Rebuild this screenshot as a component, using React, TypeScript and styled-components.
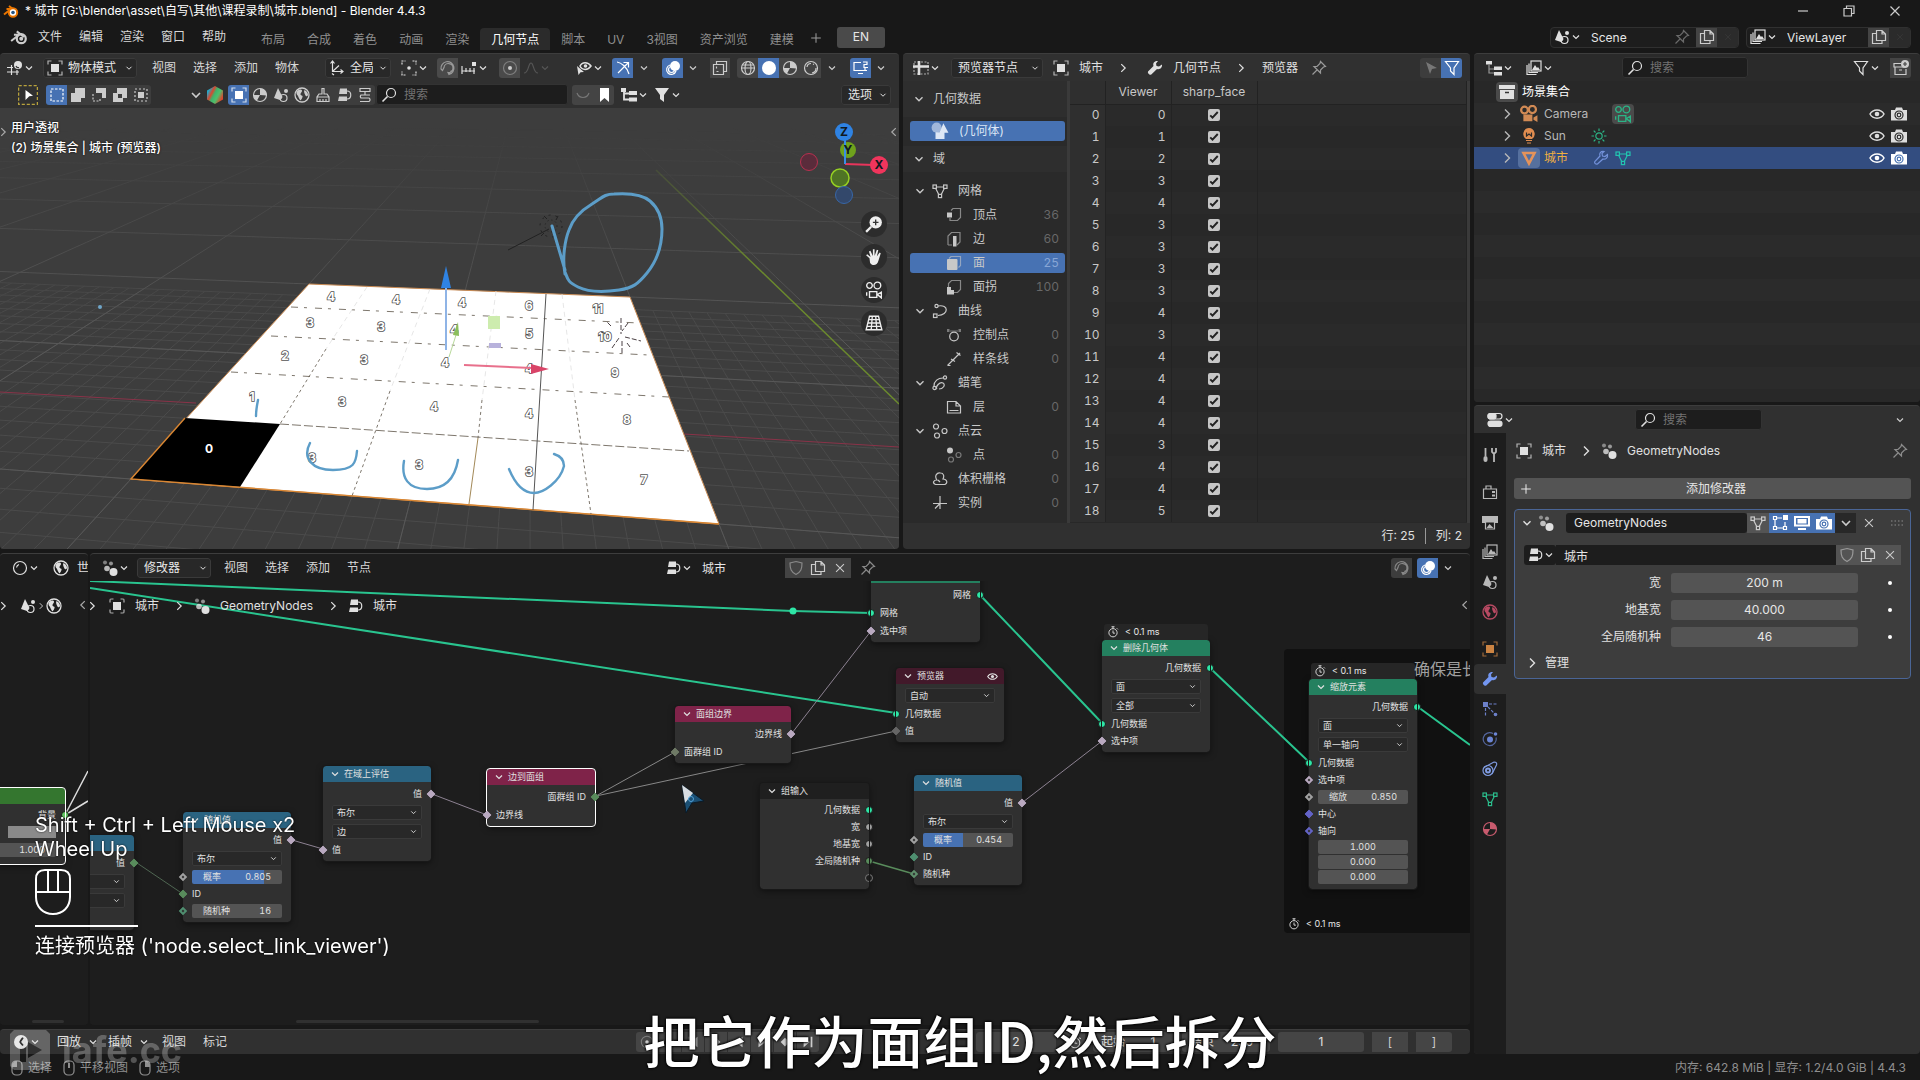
import React from "react";
import styled, { createGlobalStyle, css } from "styled-components";

const Global = createGlobalStyle`
  *, *::before, *::after { box-sizing: border-box; }
  html, body { margin: 0; height: 100%; background: #181818; }
  body {
    color: #e0e0e0;
    font: 12px/16px Inter, "Noto Sans CJK SC", sans-serif;
    overflow: hidden;
  }
  button, input, select { font: inherit; color: inherit; margin: 0; padding: 0; border: 0; background: none; outline: 0; }
  ::placeholder { color: #727272; opacity: 1; }
  svg { display: block; flex: none; }
  h1, h2, h3, p, ul { margin: 0; padding: 0; font: inherit; list-style: none; }
`;

/* ------------------------------------------------------------------ icons */

const meshShape = (
  <>
    <path d="M4 4h8M3.6 5.2L7 12M12.4 5.2L9 12" />
    <rect x="1" y="2" width="3.4" height="3.4" />
    <rect x="11.6" y="2" width="3.4" height="3.4" />
    <rect x="6.4" y="11.4" width="3.2" height="3.2" />
  </>
);

const ICONS: Record<string, React.ReactNode> = {
  down: <path d="M4 6l4 4 4-4" strokeWidth="1.6" />,
  right: <path d="M6 3.5l4.5 4.5L6 12.5" strokeWidth="1.4" />,
  left: <path d="M10 3.5L5.5 8l4.5 4.5" strokeWidth="1.4" />,
  close: <path d="M3.5 3.5l9 9M12.5 3.5l-9 9" />,
  plus: <path d="M8 2.5v11M2.5 8h11" />,
  minimise: <path d="M3 8h10" />,
  restore: <path d="M3 5.5h7.5V13H3zM5.5 5V3H13v7.5h-2" />,
  blender: (
    <>
      <path d="M1 11.5L8 6H3.5M6 3l6.5 5" strokeWidth="1.8" />
      <circle cx="10" cy="9.5" r="4" strokeWidth="2" />
      <circle cx="10" cy="9.5" r="1.2" fill="currentColor" />
    </>
  ),
  blenderColor: (
    <>
      <path d="M1 11.5L8 6H3.5M6 3l6.5 5" stroke="#ea7600" strokeWidth="2" />
      <circle cx="10" cy="9.5" r="4.2" fill="#fff" stroke="#ea7600" strokeWidth="2" />
      <circle cx="10" cy="9.5" r="1.8" fill="#265787" stroke="none" />
    </>
  ),
  view3d: (
    <>
      <path d="M4.5 5v10M0 7.5h6M0 12h12M10 10v5" />
      <circle cx="11" cy="5" r="4" fill="currentColor" stroke="none" />
      <path d="M9 6a2.5 2.5 0 0 0 3 1.5" stroke="#333" />
    </>
  ),
  object: (
    <>
      <rect x="4" y="4" width="8" height="8" fill="currentColor" stroke="none" />
      <path d="M1 4.5V1h3.5M11.5 1H15v3.5M15 11.5V15h-3.5M4.5 15H1v-3.5" opacity=".75" />
    </>
  ),
  axes: <path d="M3.5 1v10.5H14M1.5 3.5l2-2.5 2 2.5M11.5 9.5l2.5 2-2.5 2M3.5 11.5l6.5-6M3 13.5l2 1.5" />,
  pivot: (
    <>
      <circle cx="8" cy="8" r="1.8" fill="currentColor" stroke="none" />
      <path d="M1 4.5V1h3.5M11.5 1H15v3.5M15 11.5V15h-3.5M4.5 15H1v-3.5" strokeDasharray="2 1" />
    </>
  ),
  magnet: <path d="M2.5 10.5L1 9a6.5 6.5 0 1 1 8 5.5L8 12.5a4.5 4.5 0 1 0-4-5zM9 14.5l2.5-4" />,
  snap: (
    <>
      <path d="M1 6v8M5 8v4M9 8v4M13 8v6M1 11h13" />
      <rect x="11" y="2" width="4" height="4" fill="currentColor" stroke="none" />
    </>
  ),
  propEdit: (
    <>
      <circle cx="8" cy="8" r="6.5" opacity=".4" />
      <circle cx="8" cy="8" r="2" fill="currentColor" stroke="none" />
    </>
  ),
  falloff: <path d="M1 13c5 0 4-10 7-10s2 10 7 10" />,
  visibility: (
    <>
      <path d="M4 6c2-4.5 8-4.5 11 0-3 4.5-9 4.5-11 0z" strokeWidth="1.5" />
      <circle cx="9.5" cy="6" r="1.8" fill="currentColor" stroke="none" />
      <path d="M1 6l7 6-3.5.3L2.500 15z" fill="currentColor" stroke="none" />
    </>
  ),
  gizmo: <path d="M2 2c4 .5 10 5 12 12M3 13L13 3M8.5 2.5H13.5V7.5" />,
  overlay: (
    <>
      <circle cx="10" cy="6" r="5" fill="currentColor" stroke="none" />
      <path d="M5 5a4.8 4.8 0 1 0 6 6" />
      <circle cx="6.5" cy="9.5" r="3" />
    </>
  ),
  xray: <path d="M1.5 4.5h10v10h-10zM4.5 4V1.5h10v10H12M4.5 6.5v2M4.5 11.5h2" />,
  wire: (
    <>
      <circle cx="8" cy="8" r="6.5" />
      <ellipse cx="8" cy="8" rx="3" ry="6.5" />
      <path d="M1.5 8h13M2.5 5h11" />
    </>
  ),
  solid: <circle cx="8" cy="8" r="7" fill="currentColor" stroke="none" />,
  material: (
    <>
      <circle cx="8" cy="8" r="6.5" />
      <path d="M8 1.5V8H1.5A6.5 6.5 0 0 0 5 13.5L8 8l6.5.5A6.5 6.5 0 0 0 8 1.5z" fill="currentColor" stroke="none" />
    </>
  ),
  rendered: (
    <>
      <circle cx="8" cy="8" r="6.5" />
      <path d="M4 7a4 4 0 0 1 4-3.5M10 4l1 .5M9 13a5 5 0 0 0 4-5" />
    </>
  ),
  sync: (
    <>
      <path d="M8 2.5H1v8h13M5 13.5h5" />
      <path d="M10 2h4v2.5h-3v3h4M12 10V8" />
    </>
  ),
  cursorTool: (
    <>
      <rect x="0.500" y="0.500" width="15" height="15" stroke="#b8a23c" strokeDasharray="2.500 1.500" strokeWidth="1" />
      <path d="M6 4l6 4.500-3 .5-3 3z" fill="currentColor" stroke="none" />
    </>
  ),
  selBox: <rect x="2" y="2" width="12" height="12" strokeDasharray="2.5 1.5" />,
  selAdd: <path d="M5 1h10v10h-4v4H1V6h4z" fill="currentColor" stroke="none" />,
  selSub: (
    <>
      <path d="M5 1h10v10h-4V6H5z" fill="currentColor" stroke="none" />
      <path d="M2 7v7h7v-3" strokeDasharray="2 1.5" />
    </>
  ),
  selDiff: <path d="M5 1h10v10h-4v4H1V6h4zM6 7v4h4V7z" fill="currentColor" fillRule="evenodd" stroke="none" />,
  selAnd: (
    <>
      <rect x="5" y="5" width="6" height="6" fill="currentColor" stroke="none" />
      <rect x="2" y="2" width="12" height="12" strokeDasharray="2 2" />
    </>
  ),
  scene: (
    <>
      <path d="M5 1l4.5 9A4 4 0 0 1 7 13L1 11z" fill="currentColor" stroke="none" />
      <circle cx="10.5" cy="11" r="3.5" />
      <circle cx="13" cy="4" r="2" fill="currentColor" stroke="none" />
    </>
  ),
  world: (
    <>
      <circle cx="8" cy="8" r="7" strokeWidth="1.3" />
      <path d="M2.500 5c2-3 5-3 5.500-1.500S6 6 6.500 7.500 9 8 8.500 10 7 12.500 6.500 13.500C5 12 4.500 10 4 9S2 7 2.500 5zM10.500 3c2.500 1 3.500 3 3.500 5-1 2.500-2.500 1-3-.5s-1.500-3-.5-4.500z" fill="currentColor" stroke="none" />
    </>
  ),
  brush: <path d="M7 1.5h2V7h3l2 3v4.5H2V10l2-3h3zM2 10h12M5 14v-2M8 14v-2M11 14v-2" />,
  nodetree: (
    <>
      <path d="M4 1.5h7V7H3zM3 9.5h8V14H2z" fill="currentColor" stroke="none" />
      <path d="M11 4c5 0 5 8 0 8" />
    </>
  ),
  tool: <path d="M3 1.5h10v3H3zM8 4.5V8M13 8H4a2 2 0 0 0 0 3h8a2 2 0 0 1 0 3.5H3" />,
  search: (
    <>
      <circle cx="10" cy="6" r="4.5" />
      <path d="M6.5 9.5L1.5 14.5" strokeWidth="1.6" />
    </>
  ),
  arc: <path d="M2 6c2 6 10 6 12 0" />,
  bookmark: <path d="M4 1h9v14l-4.5-4L4 15z" fill="currentColor" stroke="none" />,
  tree: (
    <>
      <path d="M3 3v9.5h5M3 6.5h5" strokeWidth="1.800" />
      <path d="M0 1h5v4H0zM8 4h8v4H8zM8 10.5h8v4H8z" fill="currentColor" stroke="none" />
    </>
  ),
  funnelFill: <path d="M1 1h14l-5 7v7l-4-3V8z" fill="currentColor" stroke="none" />,
  funnel: <path d="M1.5 1.5h13L10 8v6.5L6.5 11V8z" />,
  images: (
    <>
      <path d="M1 5v9.5h9.5M3 3.5v9h9" />
      <rect x="5" y="1" width="10" height="10" />
      <path d="M6 10l3-5 2 3 1-1 2 3z" fill="currentColor" stroke="none" />
    </>
  ),
  copy: <path d="M5 4.5H1.5v10H11V12M5.5 1.5H11L14.5 5v6.5h-9zM11 1.5V5h3.5" />,
  pin: <path d="M9.5 1.5l5 5-2 .5-3 3v3L3 6.5h3l3-3zM6 10l-4.5 4.5" />,
  shield: <path d="M8 1.5l6 1.5c0 6-1 9-6 11.5C3 12 2 9 2 3z" />,
  sheet: (
    <>
      <rect x="1" y="2" width="14" height="12" strokeDasharray="2 1.5" opacity=".7" />
      <path d="M0 6.5h16M6 1v14" strokeWidth="2.6" />
    </>
  ),
  wrench: (
    <path d="M15 4.5l-3 2-2.5-.5L9 3.5 11 1C7.5.5 5.5 3 6.5 6L1 11.5c-.8 1.5 1.5 4 3.3 3L10 9c3 1 5.5-1.5 5-4.5z" fill="currentColor" stroke="none" />
  ),
  wrenchLine: <path d="M14.5 4.5l-2.5 2-2.5-.5L9 3.5 11 1.5C7.5 1 6 3.5 7 6L1.8 11.5c-.8 1.5 1 3.3 2.7 2.5L10 9c3 .5 5-1.5 4.5-4.5z" />,
  arrowCursor: <path d="M3 2l11 6-5 1-2 5z" fill="currentColor" stroke="none" />,
  geometry: (
    <>
      <circle cx="5" cy="5" r="4.5" fill="currentColor" opacity=".6" stroke="none" />
      <path d="M11 1l4.5 8.5h-8zM4 9h8v6H4z" fill="currentColor" stroke="none" />
    </>
  ),
  mesh: meshShape,
  vert: (
    <>
      <path d="M5 3.5L7 1.5h7.5v9l-3 3H4V11" opacity=".6" />
      <rect x="1" y="5.5" width="5" height="5" fill="currentColor" stroke="none" />
    </>
  ),
  edge: (
    <>
      <path d="M2 14V5l3.5-3.5H14V11l-3 3M2 14h4" opacity=".6" />
      <rect x="7" y="5" width="3.5" height="10.5" fill="currentColor" stroke="none" />
    </>
  ),
  face: (
    <>
      <path d="M3 3.5l2-2h9.5v9l-2 2" opacity=".6" />
      <rect x="1" y="4" width="10.5" height="11" rx="1" fill="currentColor" stroke="none" />
    </>
  ),
  corner: (
    <>
      <path d="M2.5 8V4.5l3-3h9v9l-3 3H8" opacity=".6" />
      <path d="M1 8h4v3h3v4.5H1z" fill="currentColor" stroke="none" />
    </>
  ),
  curve: (
    <>
      <path d="M6 3c11-2 11 9 0 9.5" />
      <circle cx="4.5" cy="3" r="1.6" />
      <rect x="1.5" y="11" width="3.5" height="3.5" />
    </>
  ),
  control: (
    <>
      <circle cx="8" cy="9.5" r="4.3" />
      <path d="M4 4h8" opacity=".4" />
      <rect x="1" y="2" width="2.5" height="3" fill="currentColor" opacity=".5" stroke="none" />
      <rect x="12.5" y="2" width="2.5" height="3" fill="currentColor" opacity=".5" stroke="none" />
    </>
  ),
  spline: <path d="M1.5 14.5L14 2M10.5 1.5l4 3M5 8l4 2.5M1.5 14.5h3" />,
  gpencil: (
    <>
      <path d="M2 11c0-5 4-8 9-8M5 14c-2-2 3-8 6-6s0 6-4 6" />
      <circle cx="13" cy="2.5" r="1.6" />
      <circle cx="2.5" cy="13" r="1.6" />
    </>
  ),
  layer: <path d="M1.5 14V2.5H10L14.5 7v7zM10 2.5V7h4.5M3.5 11.5h9" />,
  cloud: (
    <>
      <circle cx="4" cy="3.5" r="2.5" />
      <circle cx="12.5" cy="8" r="2.5" />
      <circle cx="5" cy="12.5" r="2.5" />
    </>
  ),
  point: (
    <>
      <circle cx="4" cy="3.5" r="3" fill="currentColor" stroke="none" />
      <circle cx="12.5" cy="8" r="2.5" opacity=".5" />
      <circle cx="5" cy="12.5" r="2.5" opacity=".5" />
    </>
  ),
  volume: <path d="M5 9C2 5 5 1 8.5 2c3 0 4 3 2.5 6 4 0 5 4 2 5.5H3.5C0 12 1.5 9 5 9zM6 9l2 2" />,
  instance: <path d="M8 1v13M1 8.5h14M8 8.5L3 13.5" />,
  check: <path d="M3 8.5l3 3L13 4" strokeWidth="2.6" />,
  outliner: (
    <>
      <path d="M3 5v8h5M3 9h5" opacity=".6" />
      <path d="M0 1h6v3.5H0zM8 6.5h8V10H8zM8 12h8v3.5H8z" fill="currentColor" stroke="none" />
    </>
  ),
  newCollection: (
    <>
      <path d="M8 3.5H1V7h10M2 7v7.5h11V9M6 10h3" />
      <circle cx="12" cy="4" r="4" fill="currentColor" stroke="none" />
      <path d="M12 2v4M10 4h4" stroke="#444" />
    </>
  ),
  collection: (
    <>
      <path d="M0 1h16v4H0zM1 6h14v9H1z" fill="currentColor" stroke="none" />
      <path d="M6 8.5h4" stroke="#333" strokeWidth="1.6" />
    </>
  ),
  camera: (
    <>
      <circle cx="4" cy="4.5" r="3" strokeWidth="2" />
      <circle cx="11" cy="4" r="3.2" strokeWidth="2" />
      <path d="M3 8.5h8v6H3zM12 11l3.5-2v6L12 13z" fill="currentColor" stroke="none" />
    </>
  ),
  cameraLine: (
    <>
      <circle cx="4" cy="4" r="2.5" />
      <circle cx="11" cy="4" r="3" />
      <path d="M4 9.5h6.5v5H4zM1.5 10v3M11 12l3.5-2v5z" />
    </>
  ),
  bulb: (
    <>
      <path d="M8 0a6 6 0 0 0-3 11h6A6 6 0 0 0 8 0z" fill="currentColor" stroke="none" />
      <path d="M5.5 4.5v3.5l2.5-2 2.5 2V4.5" stroke="#2b2b2b" />
      <path d="M5 12.5h6M6 15h4" />
    </>
  ),
  sun: (
    <>
      <circle cx="8" cy="8" r="3.2" />
      <path d="M8 .5V3M8 13v2.5M.5 8H3M13 8h2.5M2.7 2.7l1.8 1.8M11.5 11.5l1.8 1.8M13.3 2.7l-1.8 1.8M4.5 11.5l-1.8 1.8" />
    </>
  ),
  triangle: <path d="M2.5 3h11L8 13.5z" strokeWidth="2.6" />,
  eye: (
    <>
      <path d="M1 8c3-5.5 11-5.5 14 0-3 5.5-11 5.5-14 0z" strokeWidth="1.5" />
      <circle cx="8" cy="8" r="2.3" fill="currentColor" stroke="none" />
    </>
  ),
  photo: (
    <>
      <path d="M0 4h4l1-2.5h6L12 4h4v10.5H0z" fill="currentColor" stroke="none" />
      <circle cx="8" cy="9" r="4" stroke="#2b2b2b" />
      <circle cx="8" cy="9" r="1.8" stroke="#2b2b2b" />
    </>
  ),
  photoBlue: (
    <>
      <path d="M0 4h4l1-2.5h6L12 4h4v10.5H0z" fill="currentColor" stroke="none" />
      <circle cx="8" cy="9" r="4" stroke="#4772b3" />
      <circle cx="8" cy="9" r="1.8" stroke="#4772b3" />
    </>
  ),
  properties: (
    <>
      <rect x="1" y="1.5" width="14" height="5.5" rx="2.7" />
      <rect x="1" y="9" width="14" height="5.5" rx="2.7" fill="currentColor" />
      <rect x="1" y="1.5" width="8" height="5.5" rx="2" fill="currentColor" />
    </>
  ),
  toolTab: (
    <>
      <path d="M3.5 1v8M10 1v4l2 2 2-2V1M12 7v8" strokeWidth="1.8" />
      <rect x="1.5" y="9" width="4" height="6" rx="2" fill="currentColor" stroke="none" />
    </>
  ),
  renderTab: (
    <>
      <path d="M1.5 5h13v9.5h-13zM4 5V2h5v3" />
      <path d="M10 7h3v2h-3zM10 10.5h3v2h-3z" fill="currentColor" stroke="none" />
    </>
  ),
  outputTab: (
    <>
      <path d="M0 2h16v7H0z" fill="currentColor" stroke="none" />
      <path d="M3.5 8h9v7h-9z" fill="#1d1d1d" />
      <path d="M4.5 14l3-4 4 4z" fill="currentColor" stroke="none" />
    </>
  ),
  nodes: (
    <>
      <circle cx="3" cy="2.5" r="2" fill="currentColor" opacity=".5" stroke="none" />
      <circle cx="9" cy="3.5" r="2" fill="currentColor" opacity=".6" stroke="none" />
      <circle cx="5" cy="8.5" r="2.8" fill="currentColor" opacity=".8" stroke="none" />
      <circle cx="11.5" cy="12" r="4" fill="currentColor" stroke="none" />
    </>
  ),
  editMode: (
    <>
      <path d="M3 4v8M4 13h8M13 12V7M4 3h6" />
      <path d="M1.5 1.5h3v3h-3zM1.5 11.5h3v3h-3zM11.5 11.5h3v3h-3z" />
      <path d="M11 0h5v5h-5z" fill="currentColor" stroke="none" />
    </>
  ),
  monitor: <path d="M0 1h16v10.5H0zM2 3v6.5h12V3zM3.5 4h9v4.5h-9zM4 13h8v2H4z" fill="currentColor" fillRule="evenodd" stroke="none" />,
  grip: <path d="M1 6h14M1 10h14" strokeDasharray="1.5 2" />,
  particles: (
    <>
      <rect x="1" y="1" width="5" height="5" fill="currentColor" stroke="none" />
      <path d="M7 3h8M3.5 7v8M6 6l8 8" strokeDasharray="3 1.5" />
      <circle cx="13.5" cy="13.5" r="1.8" fill="currentColor" stroke="none" />
    </>
  ),
  physics: (
    <>
      <path d="M11 2.5a6.5 6.5 0 1 0 3 4" opacity=".7" />
      <circle cx="8" cy="8.5" r="3" fill="currentColor" stroke="none" />
      <circle cx="13.5" cy="3" r="1.8" fill="currentColor" stroke="none" />
    </>
  ),
  constraint: (
    <>
      <path d="M2 6.5L12 1c2.5 0 3 1.5 2.5 3L10 13" />
      <circle cx="6" cy="9.5" r="5" />
      <circle cx="6" cy="9.5" r="2" strokeWidth="2" />
    </>
  ),
  ball: (
    <>
      <circle cx="8" cy="8" r="6.5" />
      <path d="M4.5 7.5A4 4 0 0 1 7 4.5" />
    </>
  ),
  stopwatch: (
    <>
      <circle cx="8" cy="9" r="5.5" />
      <path d="M6 1h4M8 1v2.5M8 6v3.5h2.5M13 3l1.5 1.5" />
    </>
  ),
  clock: (
    <>
      <circle cx="8" cy="8" r="7" fill="currentColor" stroke="none" />
      <path d="M10 3.5L7 8l3 3.5" stroke="#303030" strokeWidth="1.8" />
    </>
  ),
  zoomIn: (
    <>
      <circle cx="9.5" cy="6.5" r="5.5" fill="currentColor" stroke="none" />
      <path d="M9.5 4v5M7 6.5h5" stroke="#333" />
      <path d="M5.5 10.5L1 15" strokeWidth="2" />
    </>
  ),
  hand: <path d="M4 9L1 6.5l1-1L5 8 3.5 3l1.3-.5L7 7V1h1.5v6l2-5.5 1.3.5L10.5 7.5 13 4l1 .7L12 11c-1 5-6 5-7.5 2z" fill="currentColor" stroke="none" />,
  perspective: <path d="M4 2h8l3 12H1zM2.5 8h11M3.2 5h9.6M2 11h12M6.5 2L5.5 14M9.5 2l1 12" />,
  jumpStart: <path d="M3 2h2v12H3zM13 2v12L6 8z" fill="currentColor" stroke="none" />,
  playBack: <path d="M12 2v12L4 8z" fill="currentColor" stroke="none" />,
  play: <path d="M4 2v12l8-6z" fill="currentColor" stroke="none" />,
  keyframe: <path d="M8 3l5 5-5 5-5-5z" fill="currentColor" stroke="none" />,
  jumpEnd: <path d="M3 2v12l7-6zM11 2h2v12h-2z" fill="currentColor" stroke="none" />,
  mouseLeft: (
    <>
      <path d="M3 5a4 4 0 0 1 4-4h2a4 4 0 0 1 4 4v6a4 4 0 0 1-4 4H7a4 4 0 0 1-4-4z" />
      <path d="M3 7V4l3-3h2v6z" fill="currentColor" stroke="none" />
    </>
  ),
  mouseMiddle: (
    <>
      <path d="M3 5a4 4 0 0 1 4-4h2a4 4 0 0 1 4 4v6a4 4 0 0 1-4 4H7a4 4 0 0 1-4-4z" />
      <path d="M7 3h2v5H7z" fill="currentColor" stroke="none" />
    </>
  ),
  mouseRight: (
    <>
      <path d="M3 5a4 4 0 0 1 4-4h2a4 4 0 0 1 4 4v6a4 4 0 0 1-4 4H7a4 4 0 0 1-4-4z" />
      <path d="M8 1h2l3 3v3H8z" fill="currentColor" stroke="none" />
    </>
  ),
};

const Icon = ({ n, s = 16, c }: { n: string; s?: number; c?: string }) => (
  <svg width={s} height={s} viewBox="0 0 16 16" fill="none" stroke="currentColor" strokeWidth="1.2" color={c} aria-hidden="true">
    {ICONS[n]}
  </svg>
);

/* --------------------------------------------------------------- controls */

const Page = styled.div`
  display: flex;
  flex-direction: column;
  height: 100vh;
  min-height: 640px;
`;

const Btn = styled.button<{ $on?: boolean; $bg?: string; $w?: number; $dim?: boolean }>`
  display: flex;
  align-items: center;
  justify-content: center;
  flex: none;
  height: 20px;
  width: ${(p) => p.$w ?? 21}px;
  background: ${(p) => (p.$on ? "#4772b3" : p.$bg ?? "transparent")};
  color: ${(p) => (p.$dim ? "#6a6a6a" : p.$on ? "#ffffff" : "#cccccc")};
`;

const Drop = styled.button<{ $dim?: boolean; $dark?: boolean }>`
  display: flex;
  align-items: center;
  justify-content: space-between;
  flex: none;
  width: 32px;
  height: 20px;
  padding: 0 1px 0 3px;
  border-radius: 3px;
  color: ${(p) => (p.$dim ? "#555555" : "#e0e0e0")};
  background: ${(p) => (p.$dark ? "#1d1d1d" : "transparent")};
`;

const IconDrop = ({ n, dim, dark, label }: { n: string; dim?: boolean; dark?: boolean; label: string }) => (
  <Drop $dim={dim} $dark={dark} aria-label={label}>
    <Icon n={n} />
    <Icon n="down" s={12} />
  </Drop>
);

const SelectWrap = styled.span<{ $w: number; $icon?: boolean }>`
  display: flex;
  align-items: center;
  flex: none;
  gap: ${(p) => (p.$icon ? 5 : 3)}px;
  width: ${(p) => p.$w}px;
  height: 20px;
  padding: 0 2px 0 ${(p) => (p.$icon ? 3 : 6)}px;
  border: 1px solid #3a3a3a;
  border-radius: 3px;
  background: #282828;
  select {
    appearance: none;
    flex: 1;
    min-width: 0;
    height: 18px;
    color: #e6e6e6;
  }
`;

const Select = ({ value, w, icon, label }: { value: string; w: number; icon?: string; label: string }) => (
  <SelectWrap $w={w} $icon={!!icon}>
    {icon && <Icon n={icon} />}
    <select aria-label={label}>
      <option>{value}</option>
    </select>
    <Icon n="down" s={10} />
  </SelectWrap>
);

const Cluster = styled.div<{ $ml?: number; $auto?: boolean; $gap?: number; $bg?: string }>`
  display: flex;
  align-items: center;
  flex: none;
  gap: ${(p) => p.$gap ?? 0}px;
  margin-left: ${(p) => (p.$auto ? "auto" : `${p.$ml ?? 0}px`)};
  border-radius: 3px;
  overflow: hidden;
  background: ${(p) => p.$bg ?? "transparent"};
`;

const Menus = styled.nav<{ $ml?: number }>`
  display: flex;
  flex: none;
  gap: 1px;
  margin-left: ${(p) => p.$ml ?? 8}px;
  button {
    height: 20px;
    padding: 0 8px;
    color: #d8d8d8;
    white-space: nowrap;
  }
`;

const Search = styled.label<{ $w: number }>`
  display: flex;
  align-items: center;
  flex: none;
  gap: 7px;
  width: ${(p) => p.$w}px;
  height: 21px;
  padding: 0 5px 0 4px;
  border: 1px solid #333333;
  border-radius: 3px;
  background: #1d1d1d;
  input {
    min-width: 0;
    width: 100%;
  }
`;

const SearchBox = ({ w, label }: { w: number; label: string }) => (
  <Search $w={w}>
    <Icon n="search" />
    <input type="search" placeholder="搜索" aria-label={label} />
  </Search>
);

const TextField = styled.input<{ $w?: number }>`
  width: ${(p) => (p.$w ? `${p.$w}px` : "auto")};
  flex: ${(p) => (p.$w ? "none" : "1")};
  min-width: 0;
  height: 20px;
  padding: 0 8px;
  background: #1d1d1d;
  color: #e6e6e6;
`;

const Crumb = styled.span<{ $ml?: number }>`
  margin-left: ${(p) => p.$ml ?? 10}px;
  white-space: nowrap;
  color: #e0e0e0;
`;

const Sep = styled.span<{ $l?: number; $r?: number }>`
  display: flex;
  margin: 0 ${(p) => p.$r ?? 8}px 0 ${(p) => p.$l ?? 13}px;
`;

const Area = styled.section<{ $bg?: string }>`
  display: flex;
  flex-direction: column;
  min-width: 0;
  min-height: 0;
  overflow: hidden;
  border-top: 1px solid #3d3d3d;
  border-radius: 4px;
  background: ${(p) => p.$bg ?? "#303030"};
`;

const HeaderRow = styled.header<{ $pl?: number; $pr?: number }>`
  display: flex;
  align-items: center;
  flex: none;
  height: 27px;
  padding: 0 ${(p) => p.$pr ?? 8}px 0 ${(p) => p.$pl ?? 4}px;
`;

/* ---------------------------------------------------------------- top bars */

const TitleBar = styled.div`
  display: flex;
  align-items: center;
  gap: 6px;
  height: 24px;
  flex: none;
  padding: 0 17px 2px 3px;
  color: #ffffff;
  h1 {
    flex: 1;
    white-space: nowrap;
  }
`;

const WindowButtons = styled.div`
  display: flex;
  gap: 30px;
`;

const TopBar = styled.div`
  display: flex;
  align-items: center;
  flex: none;
  height: 28px;
  padding: 0 9px 2px 10px;
`;

const TabList = styled.div`
  display: flex;
  align-self: flex-end;
  margin-left: 16px;
`;

const Tab = styled.button<{ $active?: boolean }>`
  height: 22px;
  padding: 2px 11px 0;
  border-radius: 4px 4px 0 0;
  white-space: nowrap;
  background: ${(p) => (p.$active ? "#2b2b2b" : "transparent")};
  color: ${(p) => (p.$active ? "#ffffff" : "#8f8f8f")};
`;

const LangButton = styled.button`
  width: 48px;
  height: 21px;
  margin-left: 10px;
  border-radius: 3px;
  background: #4a4a4a;
  color: #e6e6e6;
`;

const IdGroup = styled.div`
  display: flex;
  align-items: center;
  margin-left: 7px;
  height: 21px;
  overflow: hidden;
  border: 1px solid #303030;
  border-radius: 4px;
  background: #1d1d1d;
`;

const TopHeader = () => (
  <>
    <TitleBar>
      <Icon n="blenderColor" />
      <h1>* 城市 [G:\blender\asset\自写\其他\课程录制\城市.blend] - Blender 4.4.3</h1>
      <WindowButtons>
        <Btn $w={16} aria-label="最小化"><Icon n="minimise" /></Btn>
        <Btn $w={16} aria-label="还原"><Icon n="restore" /></Btn>
        <Btn $w={16} aria-label="关闭"><Icon n="close" /></Btn>
      </WindowButtons>
    </TitleBar>
    <TopBar>
      <Btn $w={18} aria-label="Blender"><Icon n="blender" s={18} /></Btn>
      <Menus $ml={2}>
        {["文件", "编辑", "渲染", "窗口", "帮助"].map((t) => <button key={t}>{t}</button>)}
      </Menus>
      <TabList role="tablist">
        {["布局", "合成", "着色", "动画", "渲染", "几何节点", "脚本", "UV", "3视图", "资产浏览", "建模"].map((t) => (
          <Tab key={t} role="tab" $active={t === "几何节点"} aria-selected={t === "几何节点"}>{t}</Tab>
        ))}
        <Btn $w={22} aria-label="添加工作区"><Icon n="plus" s={14} c="#999999" /></Btn>
      </TabList>
      <LangButton>EN</LangButton>
      <Cluster $auto>
        <IdGroup>
          <IconDrop n="scene" label="场景" />
          <TextField $w={84} defaultValue="Scene" aria-label="场景名称" />
          <Btn $w={29} $dim aria-label="固定"><Icon n="pin" /></Btn>
          <Btn $bg="#444444" aria-label="新建场景"><Icon n="copy" /></Btn>
          <Btn $bg="#2b2b2b" $dim aria-label="删除场景"><Icon n="close" s={10} c="#3a3a3a" /></Btn>
        </IdGroup>
        <IdGroup>
          <IconDrop n="images" label="视图层" />
          <TextField $w={89} defaultValue="ViewLayer" aria-label="视图层名称" />
          <Btn $bg="#444444" aria-label="新建视图层"><Icon n="copy" /></Btn>
          <Btn $bg="#2b2b2b" $dim aria-label="删除视图层"><Icon n="close" s={10} c="#3a3a3a" /></Btn>
        </IdGroup>
      </Cluster>
    </TopBar>
  </>
);

/* ------------------------------------------------------------- 3D viewport */

const ViewportArea = styled(Area)`
  flex: 899 1 0;
`;

const Stage = styled.div`
  position: relative;
  flex: 1;
  min-height: 0;
  background: #3d3d3d;
`;

const SceneSvg = styled.svg`
  position: absolute;
  inset: 0;
  width: 100%;
  height: 100%;
  text {
    font: 700 12px Inter, sans-serif;
    text-anchor: middle;
  }
`;

const StageText = styled.div`
  position: absolute;
  left: 11px;
  top: 10px;
  font-weight: 500;
  line-height: 20px;
  color: #ffffff;
  text-shadow: 0 0 2px #000000;
`;

const NavColumn = styled.div`
  position: absolute;
  right: 12px;
  top: 103px;
  display: flex;
  flex-direction: column;
  gap: 7px;
  button {
    width: 26px;
    height: 26px;
    border-radius: 13px;
    display: grid;
    place-items: center;
    background: #2c2c2c;
    color: #eeeeee;
  }
`;

const EdgeTab = styled.button<{ $right?: boolean; $top: number }>`
  position: absolute;
  ${(p) => (p.$right ? css`right: -2px;` : css`left: -4px;`)}
  top: ${(p) => p.$top}px;
  color: #aaaaaa;
`;

type P = [number, number];
const TL: P = [309, 284], TR: P = [630, 297], BR: P = [719, 524], BL: P = [131, 479];

/* Perspective map from the unit square of the ground plane to the view. */
const project = (() => {
  const d1 = [TR[0] - BR[0], TR[1] - BR[1]];
  const d2 = [BL[0] - BR[0], BL[1] - BR[1]];
  const d3 = [TL[0] - TR[0] + BR[0] - BL[0], TL[1] - TR[1] + BR[1] - BL[1]];
  const det = d1[0] * d2[1] - d2[0] * d1[1];
  const g = (d3[0] * d2[1] - d2[0] * d3[1]) / det;
  const h = (d1[0] * d3[1] - d3[0] * d1[1]) / det;
  return (u: number, v: number): P | null => {
    const w = g * u + h * v + 1;
    if (w < 0.08) return null;
    return [
      ((TR[0] - TL[0] + g * TR[0]) * u + (BL[0] - TL[0] + h * BL[0]) * v + TL[0]) / w,
      ((TR[1] - TL[1] + g * TR[1]) * u + (BL[1] - TL[1] + h * BL[1]) * v + TL[1]) / w,
    ];
  };
})();

const trace = (at: (t: number) => P | null, from: number, to: number) => {
  let d = "";
  for (let i = 0; i <= 60; i++) {
    const p = at(from + ((to - from) * i) / 60);
    if (p) d += `${d ? "L" : "M"}${p[0].toFixed(1)} ${p[1].toFixed(1)}`;
  }
  return d;
};

const range = (a: number, b: number, step: number) =>
  Array.from({ length: Math.round((b - a) / step) + 1 }, (_, i) => a + i * step);

const FACES: [string, number, number][] = [
  ["4", 331, 297], ["4", 396, 300], ["4", 462, 303], ["6", 529, 306], ["11", 598, 309],
  ["3", 310, 323], ["3", 381, 327], ["4", 454, 330], ["5", 529, 334], ["10", 605, 337],
  ["2", 285, 356], ["3", 364, 360], ["4", 445, 363], ["4", 529, 369], ["9", 615, 373],
  ["1", 252, 397], ["3", 342, 402], ["4", 434, 407], ["4", 529, 414], ["8", 627, 420],
  ["0", 209, 449], ["3", 312, 458], ["3", 419, 465], ["3", 529, 472], ["7", 644, 480],
];

const Scene = () => (
  <SceneSvg viewBox="0 108 899 441" preserveAspectRatio="xMidYMid slice" role="img" aria-label="三维视图">
    <defs>
      <linearGradient id="fade" x1="0" y1="0" x2="0" y2="1">
        <stop offset="0.05" stopColor="#000" />
        <stop offset="0.5" stopColor="#fff" />
      </linearGradient>
      <mask id="far" maskUnits="userSpaceOnUse" x="0" y="106" width="899" height="443">
        <rect x="0" y="106" width="899" height="443" fill="url(#fade)" />
      </mask>
      <linearGradient id="axis" gradientUnits="userSpaceOnUse" x1="655" y1="170" x2="760" y2="270">
        <stop offset="0" stopColor="#6b8a2c" stopOpacity="0.2" />
        <stop offset="1" stopColor="#6b8a2c" />
      </linearGradient>
    </defs>
    <g mask="url(#far)" fill="none">
      <g stroke="#4b4b4b">
        {range(-3, 4, 0.05).map((u) => <path key={`u${u}`} d={trace((t) => project(u, t), 0.1, 1.8)} />)}
        {range(0.1, 1.8, 0.05).map((v) => <path key={`v${v}`} d={trace((t) => project(t, v), -3, 4)} />)}
      </g>
      <g stroke="#585858">
        {range(-5, 6, 0.5).map((u) => <path key={`U${u}`} d={trace((t) => project(u, t), -5, 1.8)} />)}
        {range(-5, 1.5, 0.5).map((v) => <path key={`V${v}`} d={trace((t) => project(t, v), -5, 6)} />)}
      </g>
    </g>
    <path d="M0 392L196 403M684 434L899 447" stroke="#8a3349" />
    <path d="M656 170L899 404" stroke="url(#axis)" strokeWidth="1.5" />
    <path d="M309 284L630 297 719 524 131 479z" fill="#ffffff" stroke="#c98a52" strokeWidth="1" />
    <path d="M185 418L280 424 240 487 131 479z" fill="#000000" />
    <path d="M185 418L131 479 719 524" fill="none" stroke="#d98632" strokeWidth="1.4" />
    <g stroke="#5c5346" strokeWidth="0.8">
      <path d="M291 307L639 323M271 336L649 355M231 372L669 397" strokeDasharray="7 6 3 8" />
      <path d="M280 424L689 451" strokeDasharray="9 3" />
      <path d="M326 349L280 424M390 391L352 496M575 400L591 514" strokeDasharray="3 3" />
      <path d="M482 400L478 438" strokeDasharray="3 3" />
      <path d="M478 438L469 504" stroke="#8a6a2c" />
    </g>
    <path d="M367 287L326 349M430 289L390 391M496 291L482 400M562 294L575 400" stroke="#e0e0e0" strokeWidth="0.8" strokeDasharray="5 4" />
    <path d="M546 294L533 510" stroke="#555555" />
    {FACES.map(([t, x, y], i) => (
      <text key={i} x={x} y={y + 4} fill="#ffffff" stroke={t === "0" ? "none" : "#555555"} strokeWidth="1.6" paintOrder="stroke">{t}</text>
    ))}
    <g stroke="#222222" fill="none">
      <circle cx="551" cy="226" r="6" strokeDasharray="1 3" />
      <circle cx="551" cy="226" r="11" strokeDasharray="2 5" />
      <path d="M508 250L549 229M544 216l3 3M558 216l-2 4M541 236l3-3" />
    </g>
    <path d="M621 318v16M628 323l-6 8M611 326l-4-4M625 337l16 4M622 353v-12M612 348l7-10M601 332l8 3M630 347l-3-4" stroke="#4a4044" strokeDasharray="5 2" />
    <path d="M446 350V287" stroke="#8fb4e6" strokeWidth="2" />
    <path d="M446 266l5 22h-10z" fill="#2f83e3" />
    <path d="M464 365L532 368" stroke="#e8708c" strokeWidth="2" />
    <path d="M549 369l-18 5v-10z" fill="#d94468" />
    <path d="M449 357L456 335" stroke="#b8d99a" />
    <path d="M458 322l1 14-6-1z" fill="#8cbf5c" />
    <rect x="488" y="316" width="12" height="13" fill="#cdecae" />
    <rect x="489" y="343" width="12" height="5" fill="#b8b2dc" />
    <g fill="none" stroke="#5c9dc8" strokeWidth="3" strokeLinecap="round">
      <path d="M552 226L565 270M565 274C562 258 565 240 569 230 573 218 582 210 592 204S604 194 614 194C628 193 642 194 650 201S662 217 662 229C662 248 656 262 647 273S633 288 619 290C605 292 588 292 578 287S568 280 565 272" />
      <path d="M258 400C257 405 256 410 256 416M310 443C302 458 312 470 333 470S356 463 357 451M404 461C401 478 408 489 427 489S455 478 458 460M509 469C516 486 525 493 534 493S560 482 564 466Q564 457 554 454" strokeWidth="2.4" />
    </g>
    <circle cx="100" cy="307" r="2" fill="#6fa6c9" />
    <g fontWeight="700">
      <path d="M845 164L874 165" stroke="#e8355c" strokeWidth="2" />
      <circle cx="809" cy="162" r="8.5" fill="#5a2c3b" stroke="#b8304f" />
      <circle cx="848" cy="150" r="8" fill="#6fa21c" />
      <path d="M845 164V134" stroke="#3a8fe6" strokeWidth="2" />
      <circle cx="844" cy="132" r="9" fill="#2f83e3" />
      <circle cx="879" cy="165" r="9" fill="#f0355c" />
      <circle cx="840" cy="178" r="9" fill="#4f7325" stroke="#95d023" strokeWidth="1.5" />
      <circle cx="844" cy="195" r="8.5" fill="#33486b" stroke="#3767a8" />
      <text x="844" y="136" fill="#101820">Z</text>
      <text x="848" y="154" fill="#101820">Y</text>
      <text x="879" y="169" fill="#101820">X</text>
    </g>
  </SceneSvg>
);

const Viewport = () => (
  <ViewportArea aria-label="三维视图">
    <HeaderRow>
      <IconDrop n="view3d" label="编辑器类型" />
      <Cluster $ml={7}><Select value="物体模式" icon="object" w={94} label="模式" /></Cluster>
      <Menus $ml={7}>{["视图", "选择", "添加", "物体"].map((t) => <button key={t}>{t}</button>)}</Menus>
      <Cluster $ml={18}><Select value="全局" icon="axes" w={66} label="坐标系" /></Cluster>
      <Cluster $ml={7}><IconDrop n="pivot" label="轴心点" /></Cluster>
      <Cluster $ml={7}>
        <Btn $bg="#4a4a4a" $dim aria-label="吸附"><Icon n="magnet" c="#999999" /></Btn>
        <IconDrop n="snap" label="吸附到" />
      </Cluster>
      <Cluster $ml={9}>
        <Btn $bg="#4a4a4a" aria-label="衰减编辑"><Icon n="propEdit" /></Btn>
        <IconDrop n="falloff" dim label="衰减" />
      </Cluster>
      <Cluster $auto $gap={7}>
        <IconDrop n="visibility" label="可见性" />
        <Cluster>
          <Btn $on aria-label="Gizmo"><Icon n="gizmo" /></Btn>
          <Btn $w={22} aria-label="Gizmo 选项"><Icon n="down" s={12} /></Btn>
        </Cluster>
        <Cluster>
          <Btn $on aria-label="叠加层"><Icon n="overlay" /></Btn>
          <Btn $w={20} aria-label="叠加层选项"><Icon n="down" s={12} /></Btn>
        </Cluster>
        <Btn $bg="#444444" $w={20} aria-label="透视模式"><Icon n="xray" /></Btn>
        <Cluster>
          <Btn $bg="#444444" aria-label="线框"><Icon n="wire" /></Btn>
          <Btn $on aria-label="实体"><Icon n="solid" /></Btn>
          <Btn $bg="#444444" aria-label="材质预览"><Icon n="material" /></Btn>
          <Btn $bg="#444444" aria-label="渲染"><Icon n="rendered" /></Btn>
          <Btn $w={22} aria-label="着色选项"><Icon n="down" s={12} /></Btn>
        </Cluster>
        <Cluster>
          <Btn $on aria-label="视图同步"><Icon n="sync" /></Btn>
          <Btn $w={20} aria-label="同步选项"><Icon n="down" s={12} /></Btn>
        </Cluster>
      </Cluster>
    </HeaderRow>
    <HeaderRow $pl={17}>
      <Btn aria-label="选择工具"><Icon n="cursorTool" s={20} c="#ffffff" /></Btn>
      <Cluster $ml={8}>
        <Btn $on aria-label="设定选择"><Icon n="selBox" /></Btn>
        {["selAdd", "selSub", "selDiff", "selAnd"].map((n) => <Btn key={n} $bg="#3d3d3d" aria-label={n}><Icon n={n} /></Btn>)}
      </Cluster>
      <Cluster $ml={36}>
        <Btn $w={18} aria-label="展开"><Icon n="down" /></Btn>
        <Btn $w={20} aria-label="颜色">
          <svg width="16" height="18" viewBox="0 0 16 18">
            <defs>
              <linearGradient id="hex" x1="0" y1="0.2" x2="1" y2="0.8">
                <stop offset="0.1" stopColor="#25a7c9" />
                <stop offset="0.3" stopColor="#d9482f" />
                <stop offset="0.45" stopColor="#3fb36b" />
                <stop offset="0.65" stopColor="#4fc06b" />
                <stop offset="0.9" stopColor="#d9482f" />
              </linearGradient>
            </defs>
            <path d="M8 0l8 4.5v9L8 18 0 13.5v-9z" fill="url(#hex)" />
          </svg>
        </Btn>
      </Cluster>
      <Cluster $ml={3}>
        <Btn $on aria-label="物体"><Icon n="object" /></Btn>
        {["material", "scene", "world", "brush", "nodetree", "tool"].map((n) => <Btn key={n} $bg="#3d3d3d" aria-label={n}><Icon n={n} /></Btn>)}
      </Cluster>
      <Cluster $ml={1} $gap={4}>
        <SearchBox w={192} label="搜索资产" />
        <Cluster>
          <Btn $bg="#444444" aria-label="曲线"><Icon n="arc" c="#777777" /></Btn>
          <Btn $bg="#444444" aria-label="书签"><Icon n="bookmark" c="#ffffff" /></Btn>
        </Cluster>
        <Cluster $gap={1}>
          <IconDrop n="tree" label="层级" />
          <IconDrop n="funnelFill" label="过滤" />
        </Cluster>
      </Cluster>
      <Cluster $auto><Select value="选项" w={50} label="选项" /></Cluster>
    </HeaderRow>
    <Stage>
      <Scene />
      <StageText>
        <p>用户透视</p>
        <p>(2) 场景集合 | 城市 (预览器)</p>
      </StageText>
      <NavColumn>
        {["zoomIn", "hand", "cameraLine", "perspective"].map((n) => (
          <button key={n} aria-label={n}><Icon n={n} s={18} /></button>
        ))}
      </NavColumn>
      <EdgeTab $top={17} aria-label="工具栏"><Icon n="right" s={14} /></EdgeTab>
      <EdgeTab $right $top={17} aria-label="侧栏"><Icon n="left" s={14} /></EdgeTab>
    </Stage>
  </ViewportArea>
);

/* ------------------------------------------------------------- spreadsheet */

const SheetArea = styled(Area)`
  flex: 567 1 0;
`;

const SheetBody = styled.div`
  display: flex;
  flex: 1;
  min-height: 0;
`;

const SheetSide = styled.aside`
  display: flex;
  flex-direction: column;
  flex: none;
  width: 167px;
  overflow: hidden;
  border-right: 3px solid #3a3a3a;
  background: #2a2a2a;
`;

const SideHead = styled.button<{ $h: number }>`
  display: flex;
  align-items: center;
  flex: none;
  gap: 7px;
  height: ${(p) => p.$h}px;
  padding-left: 9px;
  background: #2e2e2e;
  color: #c8c8c8;
`;

const GeoRow = styled.button`
  display: flex;
  align-items: center;
  flex: none;
  gap: 10px;
  height: 20px;
  margin: 4px 2px 5px 7px;
  padding-left: 21px;
  border-radius: 3px;
  background: #4772b3;
  color: #dce6f5;
`;

const TreeList = styled.ul`
  padding: 7px 2px 0 7px;
`;

const TreeItem = styled.li<{ $child?: boolean; $sel?: boolean }>`
  display: flex;
  align-items: center;
  height: 20px;
  margin: 2px 0 4px;
  padding: 0 6px 0 ${(p) => (p.$child ? 36 : 3)}px;
  border-radius: 3px;
  background: ${(p) => (p.$sel ? "#4772b3" : "transparent")};
  color: #c8c8c8;
  gap: ${(p) => (p.$child ? 11 : 5)}px;
`;

const TreeLabel = styled.span<{ $child?: boolean }>`
  flex: 1;
  padding-left: ${(p) => (p.$child ? 0 : 5)}px;
`;

const Count = styled.span<{ $sel?: boolean }>`
  color: ${(p) => (p.$sel ? "#88a6d6" : "#686868")};
  font-feature-settings: "tnum";
`;

const ChevSlot = styled.span`
  width: 14px;
`;

const SheetMain = styled.div`
  flex: 1;
  min-width: 0;
  overflow: hidden;
  background: #282828;
  border-right: 3px solid #3a3a3a;
`;

const Table = styled.table`
  border-collapse: collapse;
  table-layout: fixed;
  width: 100%;
  font-feature-settings: "tnum";
  color: #c8c8c8;
  th {
    height: 23px;
    padding: 0;
    font-weight: 400;
    background: #2f2f2f;
    border-right: 1px solid #222222;
    border-bottom: 1px solid #222222;
  }
  td {
    height: 22px;
    padding: 0 5px 0 0;
    text-align: right;
    border-right: 1px solid #232323;
  }
  td:first-child { background: #2f2f2f; }
  tr:nth-child(odd) td:not(:first-child) { background: #2a2a2a; }
`;

const CheckLabel = styled.label`
  display: grid;
  justify-content: center;
  padding-left: 5px;
  > * { grid-area: 1 / 1; }
  input {
    appearance: none;
    width: 12px;
    height: 12px;
    border-radius: 2px;
    background: #c6c6c6;
  }
`;

const SheetFoot = styled.footer`
  display: flex;
  align-items: center;
  justify-content: flex-end;
  gap: 10px;
  flex: none;
  height: 26px;
  padding-right: 8px;
  color: #e0e0e0;
  span + span {
    padding-left: 10px;
    border-left: 1px solid #999999;
  }
`;

const TREE: { icon: string; t: string; n?: string; child?: boolean; sel?: boolean; open?: boolean }[] = [
  { icon: "mesh", t: "网格", open: true },
  { icon: "vert", t: "顶点", n: "36", child: true },
  { icon: "edge", t: "边", n: "60", child: true },
  { icon: "face", t: "面", n: "25", child: true, sel: true },
  { icon: "corner", t: "面拐", n: "100", child: true },
  { icon: "curve", t: "曲线", open: true },
  { icon: "control", t: "控制点", n: "0", child: true },
  { icon: "spline", t: "样条线", n: "0", child: true },
  { icon: "gpencil", t: "蜡笔", open: true },
  { icon: "layer", t: "层", n: "0", child: true },
  { icon: "cloud", t: "点云", open: true },
  { icon: "point", t: "点", n: "0", child: true },
  { icon: "volume", t: "体积栅格", n: "0" },
  { icon: "instance", t: "实例", n: "0" },
];

const VALUES = [0, 1, 2, 3, 4, 3, 3, 3, 3, 4, 3, 4, 4, 4, 4, 3, 4, 4, 5];

const Spreadsheet = () => (
  <SheetArea aria-label="电子表格">
    <HeaderRow $pl={7}>
      <IconDrop n="sheet" label="编辑器类型" />
      <Cluster $ml={9}><Select value="预览器节点" w={92} label="数据来源" /></Cluster>
      <Cluster $ml={10}>
        <Icon n="object" />
        <Crumb>城市</Crumb>
        <Sep $r={17}><Icon n="right" s={14} /></Sep>
        <Icon n="wrench" />
        <Crumb>几何节点</Crumb>
        <Sep $r={14}><Icon n="right" s={14} /></Sep>
        <Crumb $ml={0}>预览器</Crumb>
        <Cluster $ml={13}><Btn $w={16} aria-label="固定"><Icon n="pin" c="#999999" /></Btn></Cluster>
      </Cluster>
      <Cluster $auto>
        <Btn $bg="#3d3d3d" aria-label="仅选中"><Icon n="arrowCursor" c="#777777" /></Btn>
        <Btn $on aria-label="过滤"><Icon n="funnel" /></Btn>
      </Cluster>
    </HeaderRow>
    <SheetBody>
      <SheetSide>
        <SideHead $h={36}><Icon n="down" s={14} />几何数据</SideHead>
        <GeoRow><Icon n="geometry" s={18} />(几何体)</GeoRow>
        <SideHead $h={26}><Icon n="down" s={14} />域</SideHead>
        <TreeList>
          {TREE.map((r) => (
            <TreeItem key={r.t} $child={r.child} $sel={r.sel}>
              {!r.child && <ChevSlot>{r.open && <Icon n="down" s={14} />}</ChevSlot>}
              <Icon n={r.icon} />
              <TreeLabel $child={r.child}>{r.t}</TreeLabel>
              {r.n && <Count $sel={r.sel}>{r.n}</Count>}
            </TreeItem>
          ))}
        </TreeList>
      </SheetSide>
      <SheetMain>
        <Table>
          <colgroup>
            <col width="35" />
            <col width="66" />
            <col width="86" />
            <col />
          </colgroup>
          <thead>
            <tr>
              <th aria-label="索引" />
              <th scope="col">Viewer</th>
              <th scope="col">sharp_face</th>
              <th aria-label="空" />
            </tr>
          </thead>
          <tbody>
            {VALUES.map((v, i) => (
              <tr key={i}>
                <td>{i}</td>
                <td>{v}</td>
                <td>
                  <CheckLabel>
                    <input type="checkbox" defaultChecked aria-label={`sharp_face ${i}`} />
                    <Icon n="check" s={12} c="#222222" />
                  </CheckLabel>
                </td>
                <td />
              </tr>
            ))}
          </tbody>
        </Table>
      </SheetMain>
    </SheetBody>
    <SheetFoot>
      <span>行: 25</span>
      <span>列: 2</span>
    </SheetFoot>
  </SheetArea>
);

/* ---------------------------------------------------------------- outliner */

const OutlinerArea = styled(Area)`
  flex: 349 1 0;
`;

const OutRow = styled.div<{ $sel?: boolean; $root?: boolean }>`
  display: flex;
  align-items: center;
  height: 22px;
  padding: 0 11px 0 ${(p) => (p.$root ? 22 : 25)}px;
  background: ${(p) => (p.$sel ? "#334d80" : "transparent")};
  color: ${(p) => (p.$root ? "#ffffff" : "#b8b8b8")};
`;

const IconChip = styled.span<{ $bg?: string; $ml?: number }>`
  display: grid;
  place-items: center;
  width: 22px;
  height: 20px;
  margin-left: ${(p) => p.$ml ?? 0}px;
  border-radius: 4px;
  background: ${(p) => p.$bg ?? "transparent"};
`;

const OutName = styled.span<{ $active?: boolean }>`
  margin-left: 4px;
  color: ${(p) => (p.$active ? "#f0b040" : "inherit")};
`;

const OutList = styled.div`
  flex: 1;
  background: repeating-linear-gradient(#282828 0 22px, #2b2b2b 22px 44px);
`;

const Toggles = ({ sel }: { sel?: boolean }) => (
  <Cluster $auto $gap={1}>
    <Btn aria-label="隐藏"><Icon n="eye" c={sel ? "#ffffff" : "#dddddd"} /></Btn>
    <Btn aria-label="渲染可见"><Icon n={sel ? "photoBlue" : "photo"} c={sel ? "#ffffff" : "#dddddd"} /></Btn>
  </Cluster>
);

const Outliner = () => (
  <OutlinerArea $bg="#2a2a2a" aria-label="大纲视图">
    <HeaderRow $pl={9} $pr={9}>
      <IconDrop n="outliner" label="编辑器类型" />
      <Cluster $ml={8}><IconDrop n="images" label="显示模式" /></Cluster>
      <Cluster $ml={67}><SearchBox w={126} label="搜索大纲" /></Cluster>
      <Cluster $auto $gap={8}>
        <IconDrop n="funnel" label="过滤" />
        <Btn $bg="#444444" aria-label="新建集合"><Icon n="newCollection" /></Btn>
      </Cluster>
    </HeaderRow>
    <OutList>
      <OutRow $root>
        <IconChip $bg="#4a4a4a"><Icon n="collection" c="#e0e0e0" /></IconChip>
        <OutName>场景集合</OutName>
      </OutRow>
      <OutRow>
        <Icon n="right" />
        <IconChip $ml={3}><Icon n="camera" s={18} c="#d28a54" /></IconChip>
        <OutName>Camera</OutName>
        <IconChip $bg="#4a4a4a" $ml={24}><Icon n="cameraLine" s={18} c="#2bb385" /></IconChip>
        <Toggles />
      </OutRow>
      <OutRow>
        <Icon n="right" />
        <IconChip $ml={3}><Icon n="bulb" c="#e08d50" /></IconChip>
        <OutName>Sun</OutName>
        <IconChip $ml={22}><Icon n="sun" c="#2bb385" /></IconChip>
        <Toggles />
      </OutRow>
      <OutRow $sel>
        <Icon n="right" />
        <IconChip $ml={3} $bg="#56709e"><Icon n="triangle" c="#e5935a" /></IconChip>
        <OutName $active>城市</OutName>
        <IconChip $ml={22}><Icon n="wrenchLine" c="#7391d9" /></IconChip>
        <IconChip><Icon n="mesh" c="#22c3b0" /></IconChip>
        <Toggles sel />
      </OutRow>
    </OutList>
  </OutlinerArea>
);

/* -------------------------------------------------------------- properties */

const PropsArea = styled(Area)`
  flex: 649 1 0;
`;

const PropsBody = styled.div`
  display: flex;
  flex: 1;
  min-height: 0;
`;

const TabRail = styled.div`
  display: flex;
  flex-direction: column;
  flex: none;
  width: 32px;
  padding-top: 7px;
  background: #1d1d1d;
`;

const RailTab = styled.button<{ $active?: boolean; $gap?: boolean }>`
  display: grid;
  place-items: center;
  height: 30px;
  margin-top: ${(p) => (p.$gap ? 7 : 0)}px;
  border-radius: 4px 0 0 4px;
  background: ${(p) => (p.$active ? "#303030" : "transparent")};
`;

const PropsMain = styled.div`
  flex: 1;
  min-width: 0;
  padding: 0 9px 0 8px;
`;

const PathRow = styled.div`
  display: flex;
  align-items: center;
  height: 36px;
  padding: 0 3px 0 2px;
`;

const AddButton = styled.button`
  display: flex;
  align-items: center;
  width: 100%;
  height: 21px;
  margin-top: 9px;
  padding: 0 5px;
  border-radius: 3px;
  background: #545454;
  color: #e6e6e6;
  span { flex: 1; padding-right: 7px; }
`;

const ModPanel = styled.section`
  margin-top: 10px;
  padding-bottom: 2px;
  border: 1px solid #4a6596;
  border-radius: 4px;
  background: #3d3d3d;
`;

const ModHead = styled.div`
  display: flex;
  align-items: center;
  height: 25px;
  padding: 0 4px 0 5px;
`;

const TreeRow = styled.div`
  display: flex;
  align-items: center;
  height: 20px;
  margin: 10px 9px 4px;
`;

const Prop = styled.label`
  display: grid;
  grid-template-columns: 146px minmax(0, 1fr) 42px;
  column-gap: 10px;
  align-items: center;
  height: 27px;
  text-align: right;
  input {
    height: 20px;
    min-width: 0;
    width: 100%;
    text-align: center;
    border-radius: 3px;
    background: #545454;
    color: #e6e6e6;
  }
  i {
    width: 4px;
    height: 4px;
    margin-left: 20px;
    border-radius: 2px;
    background: #ffffff;
  }
`;

const SubPanel = styled.button`
  display: flex;
  align-items: center;
  gap: 5px;
  height: 26px;
  padding-left: 9px;
`;

const RAIL: [string, string, boolean?][] = [
  ["toolTab", "#b8b8b8"], ["renderTab", "#b8b8b8", true], ["outputTab", "#b8b8b8"], ["images", "#b8b8b8"],
  ["scene", "#b8b8b8"], ["world", "#b84a63"], ["object", "#cc8443", true], ["wrench", "#7396f0"],
  ["particles", "#6c80c9"], ["physics", "#6c86d6"], ["constraint", "#7f9be0"], ["mesh", "#2bbd8c"], ["material", "#c95b6e"],
];

const Properties = () => (
  <PropsArea aria-label="属性">
    <HeaderRow $pl={10} $pr={12}>
      <IconDrop n="properties" label="编辑器类型" />
      <Cluster $ml={119}><SearchBox w={127} label="搜索属性" /></Cluster>
      <Cluster $auto><Btn $w={16} aria-label="选项"><Icon n="down" s={12} /></Btn></Cluster>
    </HeaderRow>
    <PropsBody>
      <TabRail role="tablist">
        {RAIL.map(([n, c, gap]) => (
          <RailTab key={n} role="tab" $active={n === "wrench"} $gap={gap} aria-label={n}><Icon n={n} c={c} /></RailTab>
        ))}
      </TabRail>
      <PropsMain>
        <PathRow>
          <Icon n="object" />
          <Crumb>城市</Crumb>
          <Sep $l={12} $r={7}><Icon n="right" /></Sep>
          <Icon n="nodes" />
          <Crumb>GeometryNodes</Crumb>
          <Cluster $auto><Btn $w={16} aria-label="固定"><Icon n="pin" c="#8c8c8c" /></Btn></Cluster>
        </PathRow>
        <AddButton><Icon n="plus" s={14} /><span>添加修改器</span></AddButton>
        <ModPanel>
          <ModHead>
            <Icon n="down" s={14} />
            <Cluster $ml={4}><Icon n="nodes" /></Cluster>
            <Cluster $ml={12}><TextField $w={181} defaultValue="GeometryNodes" aria-label="修改器名称" /></Cluster>
            <Btn $w={22} $bg="#545454" aria-label="网格"><Icon n="mesh" /></Btn>
            <Btn $w={22} $on aria-label="编辑模式"><Icon n="editMode" /></Btn>
            <Btn $w={22} $on aria-label="实时"><Icon n="monitor" /></Btn>
            <Btn $w={22} $on aria-label="渲染"><Icon n="photoBlue" /></Btn>
            <Btn $bg="#282828" aria-label="更多"><Icon n="down" /></Btn>
            <Cluster $ml={2}><Btn aria-label="移除"><Icon n="close" s={14} /></Btn></Cluster>
            <Cluster $auto><Icon n="grip" c="#8c8c8c" /></Cluster>
          </ModHead>
          <TreeRow>
            <IconDrop n="nodetree" dark label="节点组" />
            <TextField defaultValue="城市" aria-label="节点组名称" />
            <Btn $bg="#545454" aria-label="伪用户"><Icon n="shield" c="#999999" /></Btn>
            <Btn $w={22} $bg="#545454" aria-label="复制"><Icon n="copy" /></Btn>
            <Btn $w={22} $bg="#545454" aria-label="取消关联"><Icon n="close" s={14} /></Btn>
          </TreeRow>
          <Prop>宽<input defaultValue="200 m" /><i /></Prop>
          <Prop>地基宽<input defaultValue="40.000" /><i /></Prop>
          <Prop>全局随机种<input defaultValue="46" /><i /></Prop>
          <SubPanel><Icon n="right" />管理</SubPanel>
        </ModPanel>
      </PropsMain>
    </PropsBody>
  </PropsArea>
);

/* ------------------------------------------------------------ node editors */

const Canvas = styled.div`
  position: relative;
  flex: 1;
  min-height: 0;
  overflow: hidden;
  background: #1d1d1d;
`;

const Links = styled.svg`
  position: absolute;
  inset: 0;
  width: 100%;
  height: 100%;
`;

const NodeBox = styled.article<{ $x: number; $y: number; $w: number; $sel?: boolean }>`
  position: absolute;
  left: ${(p) => p.$x}px;
  top: ${(p) => p.$y}px;
  width: ${(p) => p.$w}px;
  padding-bottom: 3px;
  border-radius: 3px;
  background: #303030;
  outline: ${(p) => (p.$sel ? "1px solid #ffffff" : "1px solid #181818")};
  box-shadow: 0 2px 6px #00000080;
  font-size: 9px;
  line-height: 12px;
  color: #e0e0e0;
`;

const NodeHead = styled.h3<{ $c: string }>`
  display: flex;
  align-items: center;
  gap: 3px;
  height: 16px;
  margin-bottom: 2px;
  padding: 0 6px 0 6px;
  border-radius: 3px 3px 0 0;
  background: ${(p) => p.$c};
  span { flex: 1; }
`;

const NodeRow = styled.div<{ $out?: boolean; $h?: number }>`
  display: flex;
  flex-direction: ${(p) => (p.$out ? "row-reverse" : "row")};
  align-items: center;
  gap: 5px;
  height: ${(p) => p.$h ?? 17}px;
  margin: 0 -4px;
  padding-right: ${(p) => (p.$out ? 0 : 13)}px;
`;

const Socket = styled.i<{ $c: string; $shape?: string }>`
  flex: none;
  width: ${(p) => (p.$shape ? 6 : 8)}px;
  height: ${(p) => (p.$shape ? 6 : 8)}px;
  margin: ${(p) => (p.$shape ? 1 : 0)}px;
  border-radius: ${(p) => (p.$shape ? 0 : 4)}px;
  background: ${(p) => (p.$shape === "hollow" ? "#303030" : p.$c)};
  border: ${(p) => (p.$shape === "hollow" ? 2 : 1)}px solid ${(p) => (p.$shape ? p.$c : p.$c === "#1d1d1d" ? "#777777" : "#1a1a1a")};
  transform: ${(p) => (p.$shape ? "rotate(45deg)" : "none")};
`;

const NodeSelectRow = styled.div`
  display: flex;
  align-items: center;
  height: 19px;
  padding: 0 9px;
  > span {
    display: flex;
    align-items: center;
    flex: 1;
    height: 15px;
    padding: 0 3px 0 4px;
    border: 1px solid #3a3a3a;
    border-radius: 2px;
    background: #282828;
  }
  select {
    appearance: none;
    flex: 1;
    min-width: 0;
  }
`;

const NodeField = styled.label<{ $fill?: number; $center?: boolean }>`
  display: flex;
  align-items: center;
  justify-content: space-between;
  flex: 1;
  min-width: 0;
  height: 14px;
  padding: 0 11px;
  border-radius: 2px;
  background: linear-gradient(90deg, #4772b3 ${(p) => p.$fill ?? 0}%, #545454 ${(p) => p.$fill ?? 0}%);
  white-space: nowrap;
  input {
    width: ${(p) => (p.$center ? "100%" : "34px")};
    min-width: 0;
    text-align: ${(p) => (p.$center ? "center" : "right")};
    font-feature-settings: "tnum";
  }
`;

const Vector = styled.div`
  display: grid;
  gap: 1px;
  padding: 1px 9px 2px;
`;

const Timing = styled.div<{ $x: number; $y: number; $plain?: boolean }>`
  position: absolute;
  left: ${(p) => p.$x}px;
  top: ${(p) => p.$y}px;
  display: flex;
  align-items: center;
  gap: 6px;
  width: 104px;
  height: 16px;
  padding-left: 3px;
  border-radius: 3px 3px 0 0;
  background: ${(p) => (p.$plain ? "transparent" : "#262626")};
  font-size: 9px;
  color: #e6e6e6;
`;

const Frame = styled.div`
  position: absolute;
  left: 1194px;
  right: 0;
  top: 68px;
  height: 284px;
  border-radius: 4px 0 0 4px;
  background: #111111;
`;

const FrameTitle = styled.div`
  position: absolute;
  left: 1324px;
  right: 0;
  top: 76px;
  overflow: hidden;
  white-space: nowrap;
  font-size: 16px;
  line-height: 24px;
  color: #a0a0a0;
`;

const Overlay = styled.div<{ $left: number }>`
  position: absolute;
  left: ${(p) => p.$left}px;
  top: 15px;
  display: flex;
  align-items: center;
  height: 20px;
`;

const ScrollBar = styled.i<{ $x: number; $w: number }>`
  position: absolute;
  left: ${(p) => p.$x}px;
  bottom: 2px;
  width: ${(p) => p.$w}px;
  height: 3px;
  border-radius: 2px;
  background: #303030;
`;

const Pointer = styled.svg`
  position: absolute;
  left: 590px;
  top: 202px;
`;

type Row =
  | { k: "in" | "out"; t?: string; c: string; s?: string; h?: number; field?: [string, string, number?] }
  | { k: "sel"; t: string }
  | { k: "vec"; v: string[] };

const GEO = "#2ee6a6", BOOL = "#b9a9c0", INT = "#598c5c", FLT = "#a1a1a1", VEC = "#6363c7";
const TEAL = "#24805f", BLUE = "#2a6381", WINE = "#7f2349";

const NODES: { id: string; title: string; c: string; x: number; y: number; w: number; sel?: boolean; eye?: boolean; rows: Row[] }[] = [
  { id: "split", title: "", c: TEAL, x: 781, y: -14, w: 109, rows: [
    { k: "out", t: "网格", c: GEO, h: 19 }, { k: "in", t: "网格", c: GEO, h: 18 }, { k: "in", t: "选中项", c: BOOL, s: "dia" }, ] },
  { id: "bound", title: "面组边界", c: WINE, x: 585, y: 125, w: 116, rows: [
    { k: "out", t: "边界线", c: BOOL, s: "dia", h: 19 }, { k: "in", t: "面群组 ID", c: "#6f7a66", s: "dia" }, ] },
  { id: "viewer", title: "预览器", c: "#42192a", x: 806, y: 87, w: 108, eye: true, rows: [
    { k: "sel", t: "自动" }, { k: "in", t: "几何数据", c: GEO }, { k: "in", t: "值", c: "#666666", s: "dia" }, ] },
  { id: "input", title: "组输入", c: "#1f1f1f", x: 670, y: 202, w: 109, rows: [
    { k: "out", t: "几何数据", c: GEO }, { k: "out", t: "宽", c: FLT }, { k: "out", t: "地基宽", c: FLT },
    { k: "out", t: "全局随机种", c: INT }, { k: "out", c: "#1d1d1d" }, ] },
  { id: "rand2", title: "随机值", c: BLUE, x: 824, y: 194, w: 108, rows: [
    { k: "out", t: "值", c: BOOL, s: "dia", h: 19 }, { k: "sel", t: "布尔" },
    { k: "in", c: FLT, s: "hollow", field: ["概率", "0.454", 44] },
    { k: "in", t: "ID", c: "#4f8f70", s: "dia" }, { k: "in", t: "随机种", c: "#5f8f6c", s: "hollow" }, ] },
  { id: "delete", title: "删除几何体", c: TEAL, x: 1012, y: 59, w: 108, rows: [
    { k: "out", t: "几何数据", c: GEO, h: 19 }, { k: "sel", t: "面" }, { k: "sel", t: "全部" },
    { k: "in", t: "几何数据", c: GEO }, { k: "in", t: "选中项", c: BOOL, s: "dia" }, ] },
  { id: "scale", title: "缩放元素", c: TEAL, x: 1219, y: 98, w: 108, rows: [
    { k: "out", t: "几何数据", c: GEO, h: 19 }, { k: "sel", t: "面" }, { k: "sel", t: "单一轴向" },
    { k: "in", t: "几何数据", c: GEO }, { k: "in", t: "选中项", c: BOOL, s: "hollow" },
    { k: "in", c: FLT, s: "hollow", field: ["缩放", "0.850"] },
    { k: "in", t: "中心", c: VEC, s: "dia" }, { k: "in", t: "轴向", c: VEC, s: "hollow" },
    { k: "vec", v: ["1.000", "0.000", "0.000"] }, ] },
  { id: "edges", title: "边到面组", c: WINE, x: 397, y: 188, w: 108, sel: true, rows: [
    { k: "out", t: "面群组 ID", c: INT, s: "dia", h: 19 }, { k: "in", t: "边界线", c: BOOL, s: "dia" }, ] },
  { id: "eval", title: "在域上评估", c: BLUE, x: 233, y: 185, w: 108, rows: [
    { k: "out", t: "值", c: BOOL, s: "dia", h: 19 }, { k: "sel", t: "布尔" }, { k: "sel", t: "边" },
    { k: "in", t: "值", c: BOOL, s: "dia" }, ] },
  { id: "rand1", title: "随机值", c: BLUE, x: 93, y: 231, w: 108, rows: [
    { k: "out", t: "值", c: BOOL, s: "dia", h: 19 }, { k: "sel", t: "布尔" },
    { k: "in", c: FLT, s: "hollow", field: ["概率", "0.805", 80] },
    { k: "in", t: "ID", c: INT, s: "dia" }, { k: "in", c: "#4f8f70", s: "hollow", field: ["随机种", "16"] }, ] },
  { id: "left", title: "", c: BLUE, x: -64, y: 254, w: 108, rows: [
    { k: "out", t: "值", c: INT, s: "dia", h: 19 }, { k: "sel", t: "" }, { k: "sel", t: "" }, { k: "in", c: INT, s: "dia" }, ] },
];

const renderRow = (r: Row, i: number) => {
  if (r.k === "sel")
    return (
      <NodeSelectRow key={i}>
        <span>
          <select aria-label="选项"><option>{r.t}</option></select>
          <Icon n="down" s={9} />
        </span>
      </NodeSelectRow>
    );
  if (r.k === "vec")
    return (
      <Vector key={i}>
        {r.v.map((v, j) => <NodeField key={j} $center><input defaultValue={v} aria-label={`轴向 ${j + 1}`} /></NodeField>)}
      </Vector>
    );
  return (
    <NodeRow key={i} $out={r.k === "out"} $h={r.h}>
      <Socket $c={r.c} $shape={r.s} />
      {r.field
        ? <NodeField $fill={r.field[2]}>{r.field[0]}<input defaultValue={r.field[1]} /></NodeField>
        : <span>{r.t}</span>}
    </NodeRow>
  );
};

const NodeArea = styled(Area)`
  flex: 1;
`;

const GeoNodes = () => (
  <NodeArea $bg="#1d1d1d" aria-label="几何节点编辑器">
    <HeaderRow $pl={9} $pr={12}>
      <IconDrop n="nodes" label="编辑器类型" />
      <Cluster $ml={6}><Select value="修改器" w={74} label="节点树类型" /></Cluster>
      <Menus $ml={5}>{["视图", "选择", "添加", "节点"].map((t) => <button key={t}>{t}</button>)}</Menus>
      <Cluster $ml={283}>
        <IconDrop n="nodetree" label="节点组" />
        <TextField $w={91} defaultValue="城市" aria-label="节点组名称" />
        <Btn $w={22} $bg="#444444" aria-label="伪用户"><Icon n="shield" c="#888888" /></Btn>
        <Btn $w={22} $bg="#444444" aria-label="复制"><Icon n="copy" /></Btn>
        <Btn $w={22} $bg="#444444" aria-label="取消关联"><Icon n="close" s={14} /></Btn>
        <Cluster $ml={9}><Btn $w={16} aria-label="固定"><Icon n="pin" c="#888888" /></Btn></Cluster>
      </Cluster>
      <Cluster $auto>
        <Btn $bg="#3d3d3d" aria-label="吸附"><Icon n="magnet" c="#888888" /></Btn>
        <Cluster $ml={5}>
          <Btn $on aria-label="叠加层"><Icon n="overlay" /></Btn>
          <Btn $w={20} aria-label="叠加层选项"><Icon n="down" s={12} /></Btn>
        </Cluster>
      </Cluster>
    </HeaderRow>
    <Canvas>
      <Frame />
      <Links fill="none" aria-hidden="true">
        <g stroke="#29c48f" strokeWidth="2">
          <path d="M0 0L703 30 781 32M0 7L806 132M889 13L1012 142M1120 87L1219 181M1328 126L1380 164" />
        </g>
        <circle cx="703" cy="30" r="3.5" fill={GEO} />
        <g stroke="#8d8292">
          <path d="M933 221L1012 160M202 259L233 268M342 213L397 234M702 152L781 50" />
        </g>
        <path d="M506 215L585 171M506 215L806 150" stroke="#888888" />
        <path d="M779 280L824 293" stroke="#598c5c" strokeWidth="1.5" />
        <path d="M44 280L93 313" stroke="#4f6652" />
      </Links>
      {NODES.map((n) => (
        <NodeBox key={n.id} $x={n.x} $y={n.y} $w={n.w} $sel={n.sel}>
          <NodeHead $c={n.c}>
            <Icon n="down" s={12} />
            <span>{n.title}</span>
            {n.eye && <Icon n="eye" s={11} />}
          </NodeHead>
          {n.rows.map(renderRow)}
        </NodeBox>
      ))}
      <Timing $x={1014} $y={43}><Icon n="stopwatch" s={12} />&lt; 0.1 ms</Timing>
      <Timing $x={1221} $y={82}><Icon n="stopwatch" s={12} />&lt; 0.1 ms</Timing>
      <Timing $x={1195} $y={335} $plain><Icon n="stopwatch" s={12} />&lt; 0.1 ms</Timing>
      <FrameTitle>确保是长边</FrameTitle>
      <Pointer width="26" height="32" viewBox="0 0 26 32">
        <path d="M2 2L24 18 12 20 6 30z" fill="#1b4f73" stroke="#0b1a26" />
        <path d="M2 2L13 10 5 20z" fill="#d8dde2" />
        <circle cx="11" cy="16" r="2.5" fill="none" stroke="#4fa0d8" />
      </Pointer>
      <Overlay $left={-5}>
        <Icon n="right" s={14} />
        <Cluster $ml={10}><Icon n="object" /></Cluster>
        <Crumb>城市</Crumb>
        <Sep><Icon n="right" s={14} /></Sep>
        <Icon n="nodes" />
        <Crumb>GeometryNodes</Crumb>
        <Sep $r={7}><Icon n="right" s={14} /></Sep>
        <Icon n="nodetree" />
        <Crumb>城市</Crumb>
      </Overlay>
      <EdgeTab $right $top={17} aria-label="侧栏"><Icon n="left" s={14} /></EdgeTab>
      <ScrollBar $x={206} $w={243} />
    </Canvas>
  </NodeArea>
);

const ShaderArea = styled(Area)`
  flex: none;
  width: 88px;
`;

const Swatch = styled.span`
  display: block;
  width: 48px;
  height: 12px;
  margin: 2px 0 3px 14px;
  background: #8a8a8a;
`;

const ShaderNodes = () => (
  <ShaderArea $bg="#1d1d1d" aria-label="着色器编辑器">
    <HeaderRow $pl={9} $pr={0}>
      <IconDrop n="ball" label="编辑器类型" />
      <Cluster $ml={12} $gap={8}><Icon n="world" />世</Cluster>
    </HeaderRow>
    <Canvas>
      <Links fill="none" aria-hidden="true">
        <path d="M65 234L88 190M65 234L88 220" stroke="#dddddd" strokeWidth="1.5" />
      </Links>
      <NodeBox $x={-6} $y={207} $w={71} $sel>
        <NodeHead $c="#34762f" />
        <NodeRow $out $h={18}><Socket $c="#63c763" /><span>背景</span></NodeRow>
        <Swatch />
        <NodeRow><NodeField>&nbsp;<input defaultValue="1.000" aria-label="强度" /></NodeField></NodeRow>
        <NodeRow $h={3} />
      </NodeBox>
      <Overlay $left={-4}>
        <Icon n="right" s={14} />
        <Cluster $ml={10}><Icon n="scene" /></Cluster>
        <Icon n="right" s={10} />
        <Icon n="world" />
      </Overlay>
      <EdgeTab $right $top={17} aria-label="侧栏"><Icon n="left" s={14} /></EdgeTab>
      <ScrollBar $x={32} $w={32} />
    </Canvas>
  </ShaderArea>
);

/* ---------------------------------------------------------------- timeline */

const Timeline = styled(Area)`
  flex-direction: row;
  align-items: center;
  flex: none;
  height: 25px;
  padding: 0 18px 0 10px;
`;

const MenuDrop = styled.button`
  display: flex;
  align-items: center;
  gap: 6px;
  height: 20px;
  padding: 0 1px 0 8px;
`;

const FrameField = styled.label<{ $w: number }>`
  display: flex;
  align-items: center;
  justify-content: center;
  gap: 8px;
  width: ${(p) => p.$w}px;
  height: 20px;
  padding: 0 8px;
  border-radius: 3px;
  background: #454545;
  white-space: nowrap;
  input {
    width: 100%;
    min-width: 0;
    text-align: center;
  }
`;

const TimelineBar = () => (
  <Timeline aria-label="时间线">
    <IconDrop n="clock" label="编辑器类型" />
    <Cluster $ml={7}>
      <MenuDrop>回放<Icon n="down" s={12} /></MenuDrop>
      <MenuDrop>插帧<Icon n="down" s={12} /></MenuDrop>
    </Cluster>
    <Menus $ml={3}>{["视图", "标记"].map((t) => <button key={t}>{t}</button>)}</Menus>
    <Cluster $ml={401} $gap={1}>
      {["propEdit", "down", "jumpStart", "keyframe", "playBack", "play", "keyframe", "jumpEnd"].map((n, i) => (
        <Btn key={i} $bg="#454545" $w={22} aria-label={`播放控制 ${i + 1}`}><Icon n={n} s={14} /></Btn>
      ))}
    </Cluster>
    <Cluster $auto $gap={8}>
      <FrameField $w={80}><input defaultValue="2" aria-label="当前帧" /></FrameField>
      <Btn $bg="#454545" aria-label="预览范围"><Icon n="stopwatch" s={14} /></Btn>
      <Cluster $gap={1}>
        <FrameField $w={88}>起始<input defaultValue="1" /></FrameField>
        <FrameField $w={88}>结束<input defaultValue="250" /></FrameField>
      </Cluster>
      <FrameField $w={86}><input defaultValue="1" aria-label="步长" /></FrameField>
      <Btn $bg="#454545" $w={36} aria-label="起点">[</Btn>
      <Btn $bg="#454545" $w={36} aria-label="终点">]</Btn>
    </Cluster>
  </Timeline>
);

const StatusBar = styled.footer`
  display: flex;
  align-items: center;
  gap: 9px;
  flex: none;
  height: 25px;
  padding: 0 14px 0 9px;
  color: #8f8f8f;
  span {
    display: flex;
    align-items: center;
    gap: 3px;
  }
  p { margin-left: auto; }
`;

/* ---------------------------------------------------------------- overlays */

const Keys = styled.div`
  position: fixed;
  left: 35px;
  bottom: 122px;
  color: #ffffff;
  font-size: 20px;
  line-height: 24px;
  text-shadow: 0 0 2px #000000;
  pointer-events: none;
  svg { margin: 8px 0 10px; }
  hr {
    width: 103px;
    height: 2px;
    margin: 0 0 7px;
    border: 0;
    background: #ffffff;
  }
`;

const Caption = styled.p`
  && {
    position: fixed;
    left: 0;
    right: 0;
    bottom: 1px;
    text-align: center;
    font: 500 56px/80px "Noto Sans CJK SC", sans-serif;
    color: #ffffff;
    text-shadow: 0 0 3px #000000, 0 0 3px #000000, 0 0 2px #000000;
    pointer-events: none;
  }
`;

const Mark = styled.div`
  position: fixed;
  left: 10px;
  bottom: 10px;
  display: flex;
  align-items: center;
  gap: 12px;
  color: #ffffff;
  opacity: 0.26;
  font: 700 36px/38px Inter, sans-serif;
  pointer-events: none;
`;

/* ------------------------------------------------------------------ layout */

const Workspace = styled.main`
  display: flex;
  flex: 1;
  min-height: 0;
  gap: 4px;
  padding: 1px 0;
`;

const Column = styled.div<{ $w?: number; $gap: number }>`
  display: flex;
  flex-direction: column;
  gap: ${(p) => p.$gap}px;
  min-width: 0;
  flex: ${(p) => (p.$w ? `0 0 ${p.$w}px` : "1")};
`;

const Split = styled.div<{ $grow: number; $gap: number }>`
  display: flex;
  flex: ${(p) => p.$grow} 1 0;
  min-height: 0;
  gap: ${(p) => p.$gap}px;
`;

export default function App() {
  return (
    <Page>
      <Global />
      <TopHeader />
      <Workspace>
        <Column $gap={4}>
          <Split $grow={496} $gap={4}>
            <Viewport />
            <Spreadsheet />
          </Split>
          <Split $grow={472} $gap={2}>
            <ShaderNodes />
            <GeoNodes />
          </Split>
          <TimelineBar />
        </Column>
        <Column $w={446} $gap={3}>
          <Outliner />
          <Properties />
        </Column>
      </Workspace>
      <StatusBar>
        <span><Icon n="mouseLeft" />选择</span>
        <span><Icon n="mouseMiddle" />平移视图</span>
        <span><Icon n="mouseRight" />选项</span>
        <p>内存: 642.8 MiB | 显存: 1.2/4.0 GiB | 4.4.3</p>
      </StatusBar>
      <Mark>
        <svg width="40" height="40" viewBox="0 0 40 40">
          <path d="M4 0h32l4 4v32l-4 4H4l-4-4V4zM10 8v24h6V8zM18 12l14 8-14 8z" fill="#fff" fillRule="evenodd" />
        </svg>
        lafe.cc
      </Mark>
      <Keys>
        <p>Shift + Ctrl + Left Mouse x2</p>
        <p>Wheel Up</p>
        <svg width="36" height="46" viewBox="0 0 36 46" fill="none" stroke="#fff" strokeWidth="2">
          <path d="M1 10c0-6 3-9 9-9h16c6 0 9 3 9 9v18c0 10-7 17-17 17S1 38 1 28zM1 23h34M13 1v22M23 1v22" />
        </svg>
        <hr />
        <p>连接预览器 ('node.select_link_viewer')</p>
      </Keys>
      <Caption>把它作为面组ID,然后拆分</Caption>
    </Page>
  );
}
